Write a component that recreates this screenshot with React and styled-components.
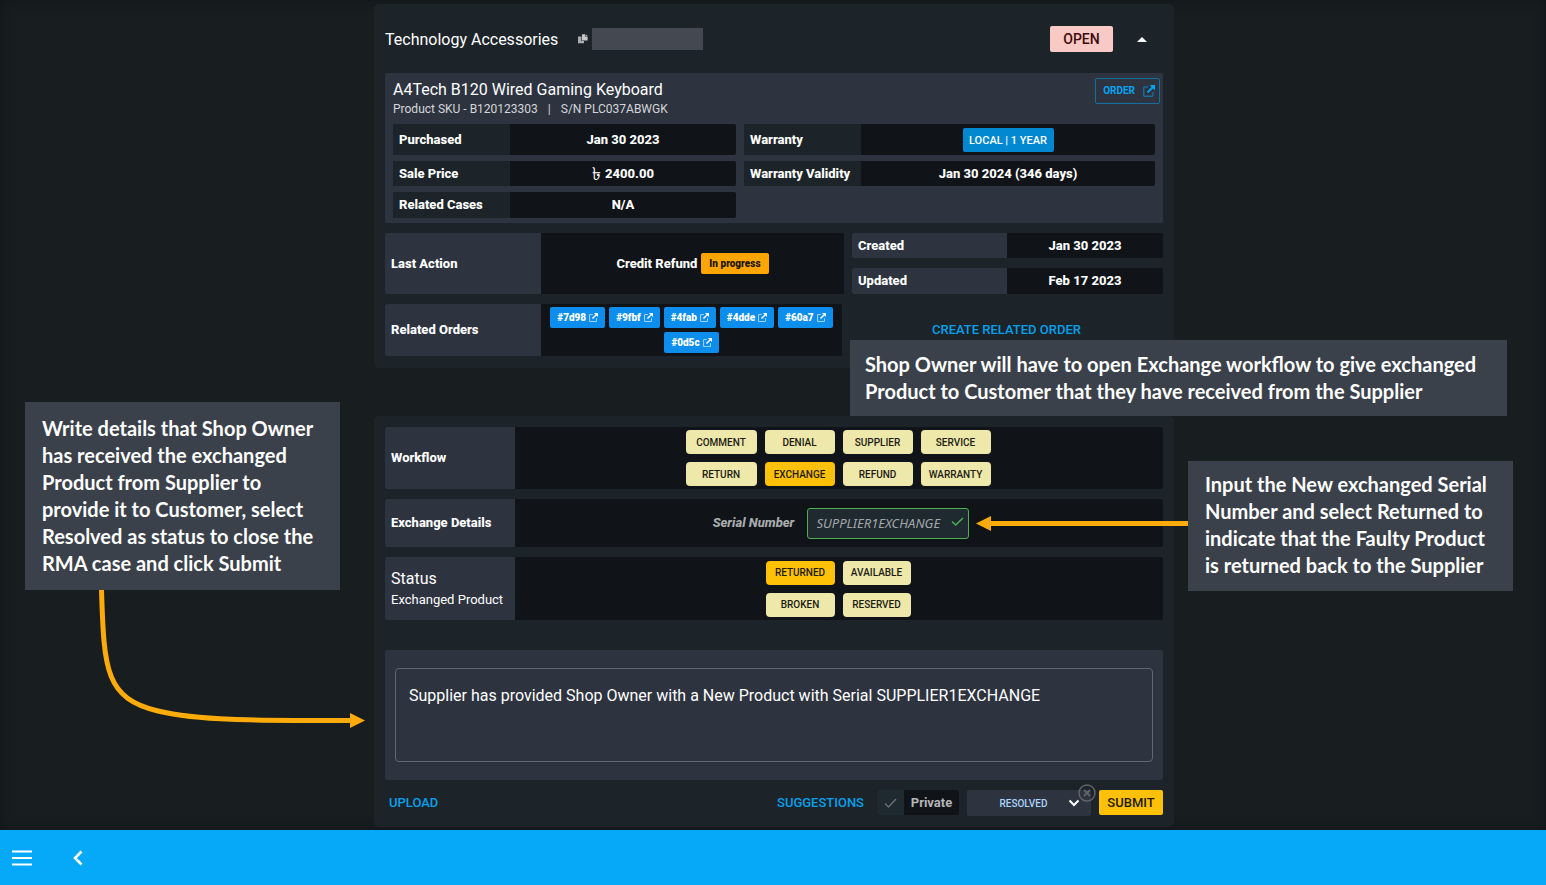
import React, { useState } from "react";
import styled, { createGlobalStyle, css } from "styled-components";

const GlobalStyle = createGlobalStyle`
  *, *::before, *::after { box-sizing: border-box; }
  body {
    margin: 0;
    background: #181d20;
    color: #fff;
    font-family: Roboto, "Noto Sans", sans-serif;
    font-size: 13px;
    line-height: 20px;
  }
  button, input, select, textarea { font: inherit; color: inherit; margin: 0; }
`;

const Page = styled.div`
  min-height: 100vh;
  display: flex;
  flex-direction: column;
  overflow-x: hidden;
`;

const Main = styled.main`
  flex: 1;
  display: flex;
  justify-content: center;
  padding: 4px 0 3px 2px;
  background: #181d20;
  box-shadow: inset 0 0 12px #111518;
`;

const Stage = styled.div`
  position: relative;
  width: 100%;
  max-width: 800px;
  display: flex;
  flex-direction: column;
  gap: 48px;
`;

const Card = styled.section`
  background: #1d2429;
  border-radius: 5px;
  padding: ${(p) => p.$pad};
  display: flex;
  flex-direction: column;
  gap: 10px;
`;

const CardHeader = styled.header`
  height: 59px;
  padding-top: 11px;
  display: flex;
  align-items: center;
`;

const Title = styled.h1`
  margin: 0;
  padding-top: 2px;
  font-size: 16px;
  font-weight: 400;
  line-height: 24px;
`;

const IconButton = styled.button`
  display: flex;
  align-items: center;
  justify-content: center;
  padding: 0;
  border: 0;
  background: none;
  width: ${(p) => p.$w}px;
  height: 24px;
  margin: ${(p) => p.$m || 0};
  cursor: pointer;
`;

const Redacted = styled.span`
  width: 111px;
  height: 22px;
  background: #434851;
`;

const Spacer = styled.span`
  flex: 1;
`;

const OpenBadge = styled.button`
  height: 26px;
  width: 63px;
  padding: 0;
  border: 0;
  border-radius: 2px;
  background: #f8c9c5;
  color: #3f0b0b;
  font-size: 14px;
  font-weight: 500;
`;

const Product = styled.div`
  background: #2d333f;
  border-radius: 2px;
  padding: 5px 8px;
`;

const ProductTop = styled.div`
  display: flex;
  justify-content: space-between;
  align-items: flex-start;
  height: 46px;
  margin-right: -5px;
`;

const ProductName = styled.h2`
  margin: 0;
  font-size: 16px;
  font-weight: 400;
  line-height: 24px;
`;

const ProductMeta = styled.p`
  margin: 0;
  display: flex;
  gap: 10px;
  font-size: 12px;
  line-height: 14px;
  color: #d5d6d9;
`;

const OrderLink = styled.a`
  display: flex;
  align-items: center;
  justify-content: flex-end;
  gap: 8px;
  width: 65px;
  height: 26px;
  padding-right: 4px;
  border: 1px solid #146f9f;
  border-radius: 2px;
  color: #03a5f5;
  font-size: 10px;
  font-weight: 700;
  text-decoration: none;
`;

const Facts = styled.div`
  display: grid;
  grid-template-columns: 343fr 411fr;
  grid-template-rows: 31px 25px 26px;
  gap: 6px 8px;
`;

const RowBox = styled.div`
  display: flex;
  border-radius: 2px;
  overflow: hidden;
  background: #101318;
  font-weight: 800;
  min-height: ${(p) => p.$h || 0}px;
`;

const RowLabel = styled.div`
  flex: none;
  width: ${(p) => p.$w}px;
  padding-left: 6px;
  display: flex;
  flex-direction: column;
  justify-content: center;
  white-space: nowrap;
  background: ${(p) => (p.$dark ? "#1d2429" : "#2d333f")};
`;

const RowValue = styled.div`
  flex: 1;
  display: flex;
  align-items: center;
  justify-content: center;
  gap: ${(p) => p.$gap || 4}px;
`;

const Taka = styled.span`
  font-size: 18px;
  font-weight: 500;
`;

const WarrantyTag = styled.button`
  width: 91px;
  height: 24px;
  padding: 2px 0 0;
  border: 0;
  border-radius: 2px;
  background: #0288d1;
  font-size: 11px;
  font-weight: 500;
`;

const Progress = styled.span`
  padding: 0 8px;
  border-radius: 2px;
  background: #ffa500;
  color: #201500;
  font-size: 10px;
  font-weight: 900;
  line-height: 21px;
`;

const Split = styled.div`
  display: grid;
  grid-template-columns: ${(p) => p.$cols};
  gap: 8px;
`;

const Stack = styled.div`
  display: flex;
  flex-direction: column;
  gap: 10px;
`;

const OrderChips = styled.div`
  flex: 1;
  display: flex;
  flex-wrap: wrap;
  justify-content: center;
  align-content: center;
  gap: 4px;
  padding: 0 8px;
`;

const OrderChip = styled.a`
  display: flex;
  align-items: center;
  gap: 3px;
  height: 21px;
  padding: 0 7px;
  border-radius: 2px;
  background: #0d8eec;
  color: #fff;
  font-size: 10px;
  font-weight: 900;
  text-decoration: none;
`;

const TextButton = styled.button`
  height: ${(p) => p.$h || 25}px;
  padding: 0;
  border: 0;
  background: none;
  color: #04a0ec;
  font-size: 13px;
  font-weight: 500;
  cursor: pointer;
`;

const ChoiceGrid = styled.div`
  display: grid;
  grid-template-columns: ${(p) => p.$cols};
  gap: 8px;
  margin-right: 2px;
`;

const Choice = styled.button`
  height: 24px;
  padding: 1px 0 0;
  border: 0;
  border-radius: 4px;
  background: ${(p) => (p.$on ? "#ffc107" : "#eee8aa")};
  color: #1c1c14;
  font-size: 10px;
  font-weight: 500;
  cursor: pointer;
`;

const StatusTitle = styled.span`
  font-size: 16px;
  font-weight: 400;
  line-height: 22px;
`;

const StatusSub = styled.span`
  font-size: 13px;
  font-weight: 400;
  line-height: 20px;
`;

const SerialLabel = styled.label`
  width: 88px;
  text-align: center;
  color: #a9abad;
  font-style: italic;
`;

const SerialBox = styled.div`
  display: flex;
  align-items: center;
  width: 162px;
  height: 31px;
  padding: 0 4px 0 9px;
  border: 1px solid #4caf50;
  border-radius: 3px;
  background: #1f2930;
`;

const SerialInput = styled.input`
  flex: 1;
  min-width: 0;
  padding: 0;
  border: 0;
  outline: 0;
  background: none;
  color: #a4a7aa;
  font: italic 400 13px/20px "Noto Sans", sans-serif;
`;

const CommentPanel = styled.div`
  margin-top: 20px;
  padding: 18px 10px;
  border-radius: 2px;
  background: #2d333f;
`;

const Comment = styled.textarea`
  display: block;
  width: 100%;
  height: 94px;
  padding: 15px 13px;
  border: 1px solid #62666f;
  border-radius: 4px;
  outline: 0;
  resize: none;
  background: none;
  font-size: 16px;
  line-height: 24px;
`;

const Actions = styled.div`
  display: flex;
  align-items: flex-start;
  height: 26px;
  padding-left: 4px;
`;

const PrivateToggle = styled.label`
  display: flex;
  align-items: center;
  height: 25px;
  margin: 0 8px 0 13px;
  border-radius: 2px;
  overflow: hidden;
  background: #101318;
  color: #b4b5b7;
  font-weight: 700;
`;

const PrivateBox = styled.input`
  appearance: none;
  width: 27px;
  height: 25px;
  background: #1f2930 url("data:image/svg+xml,%3Csvg xmlns='http://www.w3.org/2000/svg' viewBox='0 0 27 25' fill='none' stroke='%236a7074' stroke-width='1.3'%3E%3Cpath d='M8 13.5l3.5 3.5 7.5-8'/%3E%3C/svg%3E") center no-repeat;
`;

const PrivateText = styled.span`
  width: 55px;
  text-align: center;
`;

const SelectWrap = styled.div`
  position: relative;
  width: 124px;
  height: 26px;
  margin-right: 8px;
  display: flex;
`;

const StatusSelect = styled.select`
  appearance: none;
  width: 100%;
  padding: 2px 11px 0 0;
  border: 0;
  border-radius: 2px;
  background: #2d333f;
  color: #a9d4fb;
  font-size: 10px;
  font-weight: 500;
  text-align: center;
  text-align-last: center;
`;

const overlay = css`
  position: absolute;
  display: block;
`;

const SelectChevron = styled.svg`
  ${overlay}
  right: 11px;
  top: 9px;
  pointer-events: none;
`;

const ClearButton = styled.button`
  ${overlay}
  right: -5px;
  top: -6px;
  width: 18px;
  height: 18px;
  padding: 0;
  border: 0;
  background: none;
`;

const Submit = styled.button`
  width: 64px;
  height: 25px;
  padding: 0;
  border: 0;
  border-radius: 2px;
  background: #ffc107;
  color: #221b04;
  font-size: 13px;
  font-weight: 500;
`;

const Callout = styled.aside`
  ${overlay}
  left: ${(p) => p.$x}px;
  top: ${(p) => p.$y}px;
  width: ${(p) => p.$w}px;
  padding: ${(p) => p.$pad};
  background: #3b414b;
  font-family: Lato, sans-serif;
  font-size: 20px;
  font-weight: 700;
  line-height: 27px;
  white-space: nowrap;
`;

const Arrow = styled.svg`
  ${overlay}
  left: ${(p) => p.$x}px;
  top: ${(p) => p.$y}px;
  pointer-events: none;
`;

const Footer = styled.footer`
  height: 55px;
  padding-left: 10px;
  display: flex;
  align-items: center;
  gap: 32px;
  background: #05a9f7;
`;

const ExternalIcon = ({ size, box }) => (
  <svg width={size} height={size} viewBox="0 0 12 12" fill="none" aria-hidden="true">
    <path d="M5 2H1.7a1 1 0 0 0-1 1v7.3a1 1 0 0 0 1 1H9a1 1 0 0 0 1-1V7" stroke="currentColor" strokeWidth="1.4" opacity={box} />
    <path d="M4.6 7.4 10 2" stroke="currentColor" strokeWidth="2" />
    <path d="M6.6 0h5.400v5.400z" fill="currentColor" />
  </svg>
);

const Lines = ({ of }) =>
  of.map((line, i) => (
    <React.Fragment key={line}>
      {i > 0 && <br />}
      {line}
    </React.Fragment>
  ));

const Fact = ({ label, labelWidth, dark, h, children }) => (
  <RowBox $h={h}>
    <RowLabel $w={labelWidth} $dark={dark}>{label}</RowLabel>
    <RowValue>{children}</RowValue>
  </RowBox>
);

const ORDERS = ["#7d98", "#9fbf", "#4fab", "#4dde", "#60a7", "#0d5c"];
const WORKFLOWS = ["COMMENT", "DENIAL", "SUPPLIER", "SERVICE", "RETURN", "EXCHANGE", "REFUND", "WARRANTY"];
const STATUSES = ["RETURNED", "AVAILABLE", "BROKEN", "RESERVED"];

export default function App() {
  const [workflow, setWorkflow] = useState("EXCHANGE");
  const [status, setStatus] = useState("RETURNED");

  return (
    <Page>
      <GlobalStyle />
      <Main>
        <Stage>
          <Card $pad="0 11px 12px">
            <CardHeader>
              <Title>Technology Accessories</Title>
              <IconButton $w={12} $m="0 3px 0 19px" aria-label="Copy case number">
                <svg width="10" height="10" viewBox="0 0 10 10" aria-hidden="true">
                  <path d="M0 2.500h3.400V7H6v2.300H0z" fill="#a9abad" />
                  <path d="M4 .3h3v2.200h2.600v4H4z" fill="#c6c7c8" />
                  <path d="M7.600.3l2 1.700h-2z" fill="#c6c7c8" />
                </svg>
              </IconButton>
              <Redacted />
              <Spacer />
              <OpenBadge>OPEN</OpenBadge>
              <IconButton $w={58} $m="0 -8px 0 0" aria-label="Collapse">
                <svg width="10" height="5" viewBox="0 0 10 5" aria-hidden="true">
                  <path d="M0 5 5 0l5 5z" fill="#fff" />
                </svg>
              </IconButton>
            </CardHeader>

            <Product>
              <ProductTop>
                <div>
                  <ProductName>A4Tech B120 Wired Gaming Keyboard</ProductName>
                  <ProductMeta>
                    <span>Product SKU - B120123303</span>
                    <span>|</span>
                    <span>S/N PLC037ABWGK</span>
                  </ProductMeta>
                </div>
                <OrderLink href="#order">
                  ORDER <ExternalIcon size={12} box={0.5} />
                </OrderLink>
              </ProductTop>
              <Facts>
                <Fact label="Purchased" labelWidth={117} dark>Jan 30 2023</Fact>
                <Fact label="Warranty" labelWidth={117} dark>
                  <WarrantyTag>LOCAL | 1 YEAR</WarrantyTag>
                </Fact>
                <Fact label="Sale Price" labelWidth={117} dark>
                  <Taka>৳</Taka>2400.00
                </Fact>
                <Fact label="Warranty Validity" labelWidth={117} dark>Jan 30 2024 (346 days)</Fact>
                <Fact label="Related Cases" labelWidth={117} dark>N/A</Fact>
              </Facts>
            </Product>

            <Split $cols="459fr 311fr">
              <Fact label="Last Action" labelWidth={156} h={61}>
                Credit Refund <Progress>In progress</Progress>
              </Fact>
              <Stack>
                <Fact label="Created" labelWidth={155} h={25}>Jan 30 2023</Fact>
                <Fact label="Updated" labelWidth={155} h={26}>Feb 17 2023</Fact>
              </Stack>
            </Split>

            <Split $cols="457fr 313fr">
              <RowBox $h={52}>
                <RowLabel $w={156}>Related Orders</RowLabel>
                <OrderChips>
                  {ORDERS.map((id) => (
                    <OrderChip key={id} href={id}>
                      {id} <ExternalIcon size={9} box={0.6} />
                    </OrderChip>
                  ))}
                </OrderChips>
              </RowBox>
              <TextButton $h={52}>CREATE RELATED ORDER</TextButton>
            </Split>
          </Card>

          <Card $pad="11px 11px 11px">
            <RowBox $h={62}>
              <RowLabel $w={130}>Workflow</RowLabel>
              <RowValue>
                <ChoiceGrid $cols="71px 70px 70px 70px">
                  {WORKFLOWS.map((name) => (
                    <Choice key={name} $on={name === workflow} onClick={() => setWorkflow(name)}>
                      {name}
                    </Choice>
                  ))}
                </ChoiceGrid>
              </RowValue>
            </RowBox>
            <RowBox $h={48}>
              <RowLabel $w={130}>Exchange Details</RowLabel>
              <RowValue $gap={9}>
                <SerialLabel htmlFor="serial">Serial Number</SerialLabel>
                <SerialBox>
                  <SerialInput id="serial" defaultValue="SUPPLIER1EXCHANGE" />
                  <svg width="13" height="12" viewBox="0 0 13 12" fill="none" aria-hidden="true">
                    <path d="M1 4.500 4.700 8 12 1" stroke="#4caf50" strokeWidth="1.500" />
                  </svg>
                </SerialBox>
              </RowValue>
            </RowBox>
            <RowBox $h={63}>
              <RowLabel $w={130}>
                <StatusTitle>Status</StatusTitle>
                <StatusSub>Exchanged Product</StatusSub>
              </RowLabel>
              <RowValue>
                <ChoiceGrid $cols="69px 68px">
                  {STATUSES.map((name) => (
                    <Choice key={name} $on={name === status} onClick={() => setStatus(name)}>
                      {name}
                    </Choice>
                  ))}
                </ChoiceGrid>
              </RowValue>
            </RowBox>

            <CommentPanel>
              <Comment
                aria-label="Comment"
                defaultValue="Supplier has provided Shop Owner with a New Product with Serial SUPPLIER1EXCHANGE"
              />
            </CommentPanel>

            <Actions>
              <TextButton>UPLOAD</TextButton>
              <Spacer />
              <TextButton>SUGGESTIONS</TextButton>
              <PrivateToggle>
                <PrivateBox type="checkbox" />
                <PrivateText>Private</PrivateText>
              </PrivateToggle>
              <SelectWrap>
                <StatusSelect aria-label="Case status" defaultValue="RESOLVED">
                  <option>RESOLVED</option>
                </StatusSelect>
                <SelectChevron width="12" height="8" viewBox="0 0 12 8" fill="none">
                  <path d="M1.500 1.500 6 6l4.500-4.500" stroke="#fff" strokeWidth="2" />
                </SelectChevron>
                <ClearButton aria-label="Clear status">
                  <svg width="18" height="18" viewBox="0 0 18 18" fill="none" stroke="#606468">
                    <circle cx="9" cy="9" r="8" strokeWidth="1.500" />
                    <path d="M6 6l6 6M12 6l-6 6" strokeWidth="2" />
                  </svg>
                </ClearButton>
              </SelectWrap>
              <Submit>SUBMIT</Submit>
            </Actions>
          </Card>

          <Callout $x={476} $y={336} $w={657} $pad="11px 15px">
            <Lines of={[
              "Shop Owner will have to open Exchange workflow to give exchanged",
              "Product to Customer that they have received from the Supplier",
            ]} />
          </Callout>
          <Callout $x={-349} $y={398} $w={315} $pad="13px 17px">
            <Lines of={[
              "Write details that Shop Owner",
              "has received the exchanged",
              "Product from Supplier to",
              "provide it to Customer, select",
              "Resolved as status to close the",
              "RMA case and click Submit",
            ]} />
          </Callout>
          <Callout $x={814} $y={457} $w={325} $pad="10px 17px 12px">
            <Lines of={[
              "Input the New exchanged Serial",
              "Number and select Returned to",
              "indicate that the Faulty Product",
              "is returned back to the Supplier",
            ]} />
          </Callout>
          <Arrow $x={602} $y={512} width="212" height="15" viewBox="0 0 212 15">
            <path d="M14 7.500H212" stroke="#fcab0a" strokeWidth="5" />
            <path d="M0 7.500 15 0v15z" fill="#fcab0a" />
          </Arrow>
          <Arrow $x={-276} $y={586} width="268" height="140" viewBox="0 0 268 140" fill="none">
            <path d="M3.500 0C6 82 8 108 60 121C100 130.500 150 130.500 254 130.500" stroke="#fcab0a" strokeWidth="5" />
            <path d="M267 130.500 252 123v15z" fill="#fcab0a" />
          </Arrow>
        </Stage>
      </Main>
      <Footer>
        <IconButton $w={24} aria-label="Menu">
          <svg width="20" height="16" viewBox="0 0 20 16" stroke="#fff" strokeWidth="2">
            <path d="M0 1.500h20M0 8h20M0 14.500h20" />
          </svg>
        </IconButton>
        <IconButton $w={24} aria-label="Back">
          <svg width="10" height="16" viewBox="0 0 10 16" fill="none" stroke="#fff" strokeWidth="2.600">
            <path d="M8.500 1.500 2 8l6.500 6.500" />
          </svg>
        </IconButton>
      </Footer>
    </Page>
  );
}
